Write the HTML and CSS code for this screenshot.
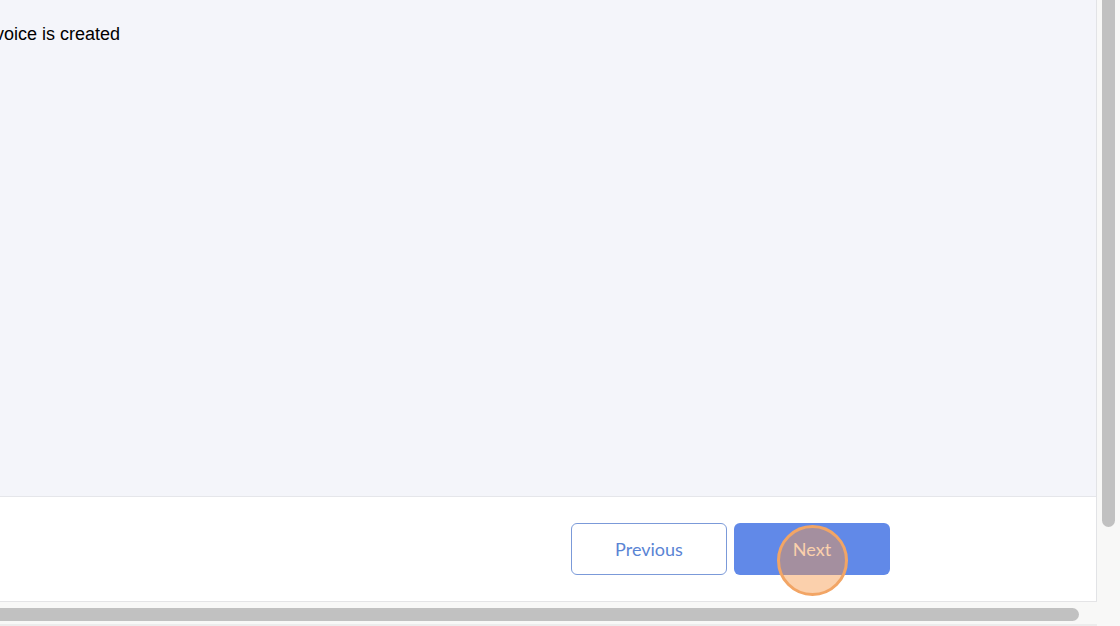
FILE: index.html
```html
<!DOCTYPE html>
<html lang="en">
<head>
    <meta charset="UTF-8">
    <meta name="viewport" content="width=device-width, initial-scale=1.0">
    <title>Invoice step</title>
    <link rel="stylesheet" href="styles.css">
</head>
<body>
    <div class="viewport">
        <div class="page">
            <div class="content">
                <p class="step-text">invoice is created</p>
            </div>
            <div class="footer">
                <button class="btn btn-outline">Previous</button>
                <button class="btn btn-primary">Next
                    <span class="click-marker"></span>
                </button>
            </div>
        </div>
        <div class="vscroll"><div class="vthumb"></div></div>
        <div class="hscroll"><div class="hthumb"></div></div>
        <div class="corner"></div>
    </div>
</body>
</html>
```

FILE: styles.css
```css
html, body {
    margin: 0;
    padding: 0;
    overflow: hidden;
}
body {
    font-family: "Liberation Sans", Arial, sans-serif;
    background: #f9f9f9;
}
.viewport {
    display: grid;
    grid-template-columns: 1097px 23px;
    grid-template-rows: 602px 24px;
    width: 1120px;
    height: 626px;
}
.page {
    display: flex;
    flex-direction: column;
    border-right: 1px solid #e2e3e6;
    border-bottom: 1px solid #e4e4e6;
    overflow: hidden;
}
.content {
    flex: 1;
    background-color: #f4f5fa;
    border-bottom: 1px solid #e5e6ea;
}
.step-text {
    margin: 24px 0 0 -19px;
    font-size: 18px;
    color: #000;
}
.footer {
    height: 104px;
    background: white;
    display: flex;
    justify-content: flex-end;
    align-items: center;
    gap: 7px;
    padding-right: 206px;
}
.btn {
    position: relative;
    width: 156px;
    height: 52px;
    border-radius: 6px;
    font-family: "Lato", "Open Sans", sans-serif;
    font-size: 18px;
    cursor: pointer;
}
.btn-outline {
    background: white;
    border: 1px solid #7b9ad9;
    color: #5a84d4;
}
.btn-primary {
    background-color: #6189e8;
    border: none;
    color: white;
}
.click-marker {
    position: absolute;
    left: 43px;
    top: 2px;
    width: 65px;
    height: 65px;
    border-radius: 50%;
    border: 3px solid #f2a565;
    background: rgba(246, 150, 70, 0.45);
}
.vscroll {
    background: #f8f8f7;
    padding-left: 5px;
}
.vthumb {
    width: 13px;
    height: 527px;
    background: #c1c1c1;
    border-radius: 0 0 7px 7px;
}
.hscroll {
    background: #f8f8f7;
    padding-top: 6px;
    border-bottom: 2px solid #ececec;
    box-sizing: border-box;
}
.hthumb {
    width: 1079px;
    height: 13px;
    background: #c1c1c1;
    border-radius: 0 7px 7px 0;
}
.corner {
    background: #f8f8f7;
}
```
